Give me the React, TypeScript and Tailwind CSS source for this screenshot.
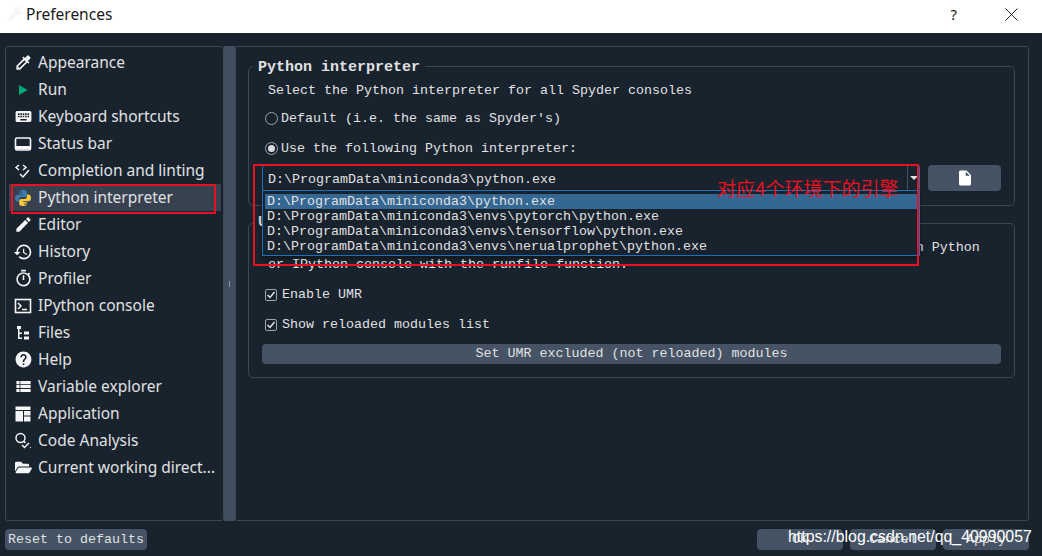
import React from "react";
import { MdColorize, MdKeyboard, MdEdit, MdHistory, MdOutlineTimer, MdHelp, MdViewList, MdInsertDriveFile, MdBuild } from "react-icons/md";
import { FaFolderOpen } from "react-icons/fa";

const ui = "font-['Noto_Sans','Noto_Sans_CJK_SC',sans-serif]";
const mono = "font-['Liberation_Mono','Noto_Sans_CJK_SC',monospace]";

const Run = () => (
  <svg width="18" height="18" viewBox="0 0 18 18"><path d="M5 4v10l8.500-5z" fill="#00aa77" /></svg>
);
const StatusBar = () => (
  <svg width="18" height="18" viewBox="0 0 18 18"><rect x="1.500" y="3" width="15" height="12" rx="1.500" fill="none" stroke="#f4f5f6" strokeWidth="1.600" /><rect x="2" y="11" width="14" height="3.500" fill="#f4f5f6" /></svg>
);
const Completion = () => (
  <svg width="18" height="18" viewBox="0 0 18 18" fill="none" stroke="#f4f5f6" strokeWidth="1.500"><path d="M5 3 2 5.500 5 8M9 3l3 2.500L9 8" /><path d="m6 12 3 3 6-7" /></svg>
);
const Py = () => (
  <svg width="18" height="18" viewBox="0 0 18 18"><path d="M8.800 1C5.500 1 5.400 2.400 5.400 3v2H9v.7H3.500C2 5.700 1 7 1 9s1 3.400 2.500 3.400h1.600V10.200c0-1.300 1-2.300 2.300-2.300h3.500c1 0 1.900-.9 1.900-2V3c0-1.300-1.400-2-3.500-2z" fill="#3a7cb0" /><circle cx="6.900" cy="3" r=".7" fill="#19232d" /><path d="M9.200 17c3.300 0 3.400-1.400 3.400-2v-2H9v-.7h5.500c1.500 0 2.500-1.300 2.500-3.300s-1-3.400-2.500-3.400h-1.600v2.200c0 1.300-1 2.300-2.300 2.300H7.100c-1 0-1.900.9-1.900 2V15c0 1.300 1.400 2 4 2z" fill="#f2c83c" /><circle cx="11.100" cy="15" r=".7" fill="#19232d" /></svg>
);
const Terminal = () => (
  <svg width="18" height="18" viewBox="0 0 18 18" fill="none" stroke="#f4f5f6"><rect x="1.500" y="2.500" width="15" height="13" strokeWidth="1.600" /><path d="m4 6 3 3-3 3" strokeWidth="1.500" /><path d="M8 12.500h5" strokeWidth="1.500" /></svg>
);
const FilesI = () => (
  <svg width="18" height="18" viewBox="0 0 18 18" fill="#f4f5f6"><rect x="3" y="2" width="4" height="3" /><rect x="4" y="5" width="1.500" height="10" /><rect x="4" y="8.500" width="4" height="1.500" /><rect x="4" y="13.500" width="4" height="1.500" /><rect x="10" y="7.500" width="5" height="3" /><rect x="10" y="12.500" width="5" height="3" /></svg>
);
const AppI = () => (
  <svg width="18" height="18" viewBox="0 0 18 18" fill="#f4f5f6"><rect x="1.500" y="1.500" width="15" height="3.500" /><rect x="1.500" y="6" width="7.500" height="10.500" /><rect x="10" y="6" width="6.500" height="4.500" /><rect x="10" y="11.500" width="6.500" height="5" /></svg>
);
const Analysis = () => (
  <svg width="18" height="18" viewBox="0 0 18 18" fill="none" stroke="#f4f5f6" strokeWidth="1.500"><circle cx="6.500" cy="6" r="4.500" /><path d="m10 9.500 1.500 1.500M8 13l2.500 2.500L15 11" /><circle cx="16.500" cy="15.500" r=".6" fill="#f4f5f6" stroke="none" /></svg>
);

const icon = "text-[#f4f5f6]";
const items: [React.ReactNode, string][] = [
  [<MdColorize size={19} className={icon} />, "Appearance"],
  [<Run />, "Run"],
  [<MdKeyboard size={19} className={icon} />, "Keyboard shortcuts"],
  [<StatusBar />, "Status bar"],
  [<Completion />, "Completion and linting"],
  [<Py />, "Python interpreter"],
  [<MdEdit size={19} className={icon} />, "Editor"],
  [<MdHistory size={20} className={icon} />, "History"],
  [<MdOutlineTimer size={19} className={icon} />, "Profiler"],
  [<Terminal />, "IPython console"],
  [<FilesI />, "Files"],
  [<MdHelp size={19} className={icon} />, "Help"],
  [<MdViewList size={19} className={icon} />, "Variable explorer"],
  [<AppI />, "Application"],
  [<Analysis />, "Code Analysis"],
  [<FaFolderOpen size={17} className={icon} />, "Current working direct..."],
];

const Footer = ({ t, w }: { t: string; w: string }) => (
  <div className={`${w} h-[21px] pt-[1px] bg-[#455364] rounded flex items-center justify-center text-[13.330px] text-[#e0e1e3] ${mono}`}>{t}</div>
);

const Radio = ({ on, t }: { on?: boolean; t: string }) => (
  <div className="flex items-center h-[16px] pl-[16px]">
    <div className="w-[13px] h-[13px] rounded-full border border-[#9aa5b0] flex items-center justify-center mr-[3px] -mt-[1px]">
      {on && <div className="w-[7px] h-[7px] rounded-full bg-[#d8dce0]" />}
    </div>
    <span>{t}</span>
  </div>
);

const Check = ({ t }: { t: string }) => (
  <div className="flex items-center h-[16px] pl-[16px]">
    <div className="w-[12px] h-[12px] rounded-[2px] border border-[#9aa5b0] flex items-center justify-center mr-[5px] -mt-[1px]">
      <svg width="10" height="10" viewBox="0 0 10 10" fill="none" stroke="#e0e1e3" strokeWidth="1.500"><path d="m1.500 5 2.500 2.500L8.500 2" /></svg>
    </div>
    <span>{t}</span>
  </div>
);

export default function App() {
  return (
    <div className={`relative w-[1042px] h-[556px] overflow-hidden bg-[#19232d] flex flex-col ${ui}`}>
      <div className="h-[33px] bg-white flex items-center shrink-0 text-[#1a1a1a] pb-[5px]">
        <MdBuild size={16} className="ml-[7px] text-[#f6f6f6] -scale-x-100" />
        <span className="ml-[3px] text-[15.500px] leading-[20px]">Preferences</span>
        <span className="ml-auto text-[15px] leading-[20px]">?</span>
        <svg className="ml-[48px] mr-[24px]" width="13" height="13" viewBox="0 0 13 13" stroke="#222" fill="none"><path d="m.5.500 12 12M12.500.500l-12 12" /></svg>
      </div>

      <div className="flex h-[488px] shrink-0 pt-[13px] pl-[5px] pr-[13px]">
        <div className="w-[219px] h-[475px] border border-[#3a4755] rounded-[3px] pt-[2px] pl-[3px] pr-[2px] shrink-0">
          {items.map(([ic, t]) => (
            <div key={t} className={`h-[27px] flex items-center pl-[4px] text-[15.500px] text-[#e0e1e3] whitespace-nowrap ${t === "Python interpreter" ? "bg-[#37414f]" : ""}`}>
              <div className="w-[20px] flex justify-center mr-[5px]">{ic}</div>
              <span>{t}</span>
            </div>
          ))}
        </div>
        <div className="w-[11px] h-[475px] bg-[#414e5e] shrink-0 flex items-center justify-center">
          <div className="w-px h-[6px] bg-[#8b97a3]" />
        </div>
        <div className={`flex-1 h-[475px] border border-[#3a4755] rounded-[3px] pt-[19px] pl-[12px] pr-[13px] text-[13.330px] text-[#e0e1e3] ${mono}`}>
          <div className="relative h-[140px] border border-[#3a4755] rounded-[5px] flex flex-col">
            <div className="absolute -top-[8px] left-[4px] px-[5px] bg-[#19232d] font-bold text-[15px] leading-[18px]">Python interpreter</div>
            <div className="pl-[19px] pt-[15px] h-[31px] leading-[16px] mt-[1px]">Select the Python interpreter for all Spyder consoles</div>
            <div className="mt-[12px]"><Radio t="Default (i.e. the same as Spyder's)" /></div>
            <div className="mt-[14px]"><Radio on t="Use the following Python interpreter:" /></div>
            <div className="mt-[8px] ml-[13px] flex gap-[8px]">
              <div className="w-[658px] h-[26px] border border-[#1a72bb] rounded-[3px] flex items-center justify-between pl-[5px]">
                <span className="pt-[4px]">D:\ProgramData\miniconda3\python.exe</span>
                <div className="w-[12px] h-full border-l border-[#455364] flex items-center justify-center">
                  <div className="w-0 h-0 border-x-[4px] border-x-transparent border-t-[4px] border-t-[#e0e1e3]" />
                </div>
              </div>
              <div className="w-[73px] h-[26px] bg-[#455364] rounded flex items-center justify-center">
                <MdInsertDriveFile size={18} className="text-white" />
              </div>
            </div>
          </div>

          <div className="relative mt-[17px] h-[155px] border border-[#3a4755] rounded-[5px]">
            <div className="absolute -top-[10px] left-[4px] px-[5px] bg-[#19232d] font-bold text-[15px] leading-[18px]">User Module Reloader (UMR)</div>
            <div className="pl-[19px] pt-[15px] leading-[17px] whitespace-nowrap">UMR forces Python to reload modules which were imported when executing a script in Python</div>
            <div className="pl-[19px] pt-[1px] leading-[16px]">or IPython console with the runfile function.</div>
            <div className="mt-[14px]"><Check t="Enable UMR" /></div>
            <div className="mt-[14px]"><Check t="Show reloaded modules list" /></div>
            <div className="mt-[11px] mx-[13px] h-[20px] bg-[#455364] rounded flex items-center justify-center">Set UMR excluded (not reloaded) modules</div>
          </div>
        </div>
      </div>

      <div className="h-[35px] shrink-0 flex items-start pt-[8px] pl-[5px] pr-[13px] gap-[7px]">
        <Footer t="Reset to defaults" w="w-[142px] mr-[603px]" />
        <Footer t="OK" w="w-[86px]" />
        <Footer t="Cancel" w="w-[86px]" />
        <Footer t="Apply" w="w-[86px]" />
      </div>

      <div className={`absolute left-[262px] top-[190px] w-[658px] h-[66px] bg-[#19232d] border border-[#1a72bb] shadow-[0_2px_4px_rgba(0,0,0,0.4)] pt-[3px] px-[2px] text-[13.330px] leading-[15px] text-[#e0e1e3] whitespace-nowrap ${mono}`}>
        <div className="bg-[#346792] h-[15px] pl-[2px]">D:\ProgramData\miniconda3\python.exe</div>
        <div className="h-[15px] pl-[2px]">D:\ProgramData\miniconda3\envs\pytorch\python.exe</div>
        <div className="h-[15px] pl-[2px]">D:\ProgramData\miniconda3\envs\tensorflow\python.exe</div>
        <div className="h-[15px] pl-[2px]">D:\ProgramData\miniconda3\envs\nerualprophet\python.exe</div>
      </div>

      <div className="absolute left-[11px] top-[184px] w-[205px] h-[30px] border-2 border-[#e81123]" />
      <div className="absolute left-[253px] top-[164px] w-[666px] h-[102px] border-2 border-[#e81123]" />
      <div className="absolute left-[717px] top-[176px] text-[19px] leading-[24px] text-[#e81123] whitespace-nowrap font-['Noto_Sans_CJK_SC',sans-serif]">对应4个环境下的引擎</div>
      <div className="absolute left-[788px] top-[527px] text-[15.900px] leading-[20px] text-white whitespace-nowrap font-['Liberation_Sans',sans-serif]">https://blog.csdn.net/qq_40990057</div>
    </div>
  );
}
